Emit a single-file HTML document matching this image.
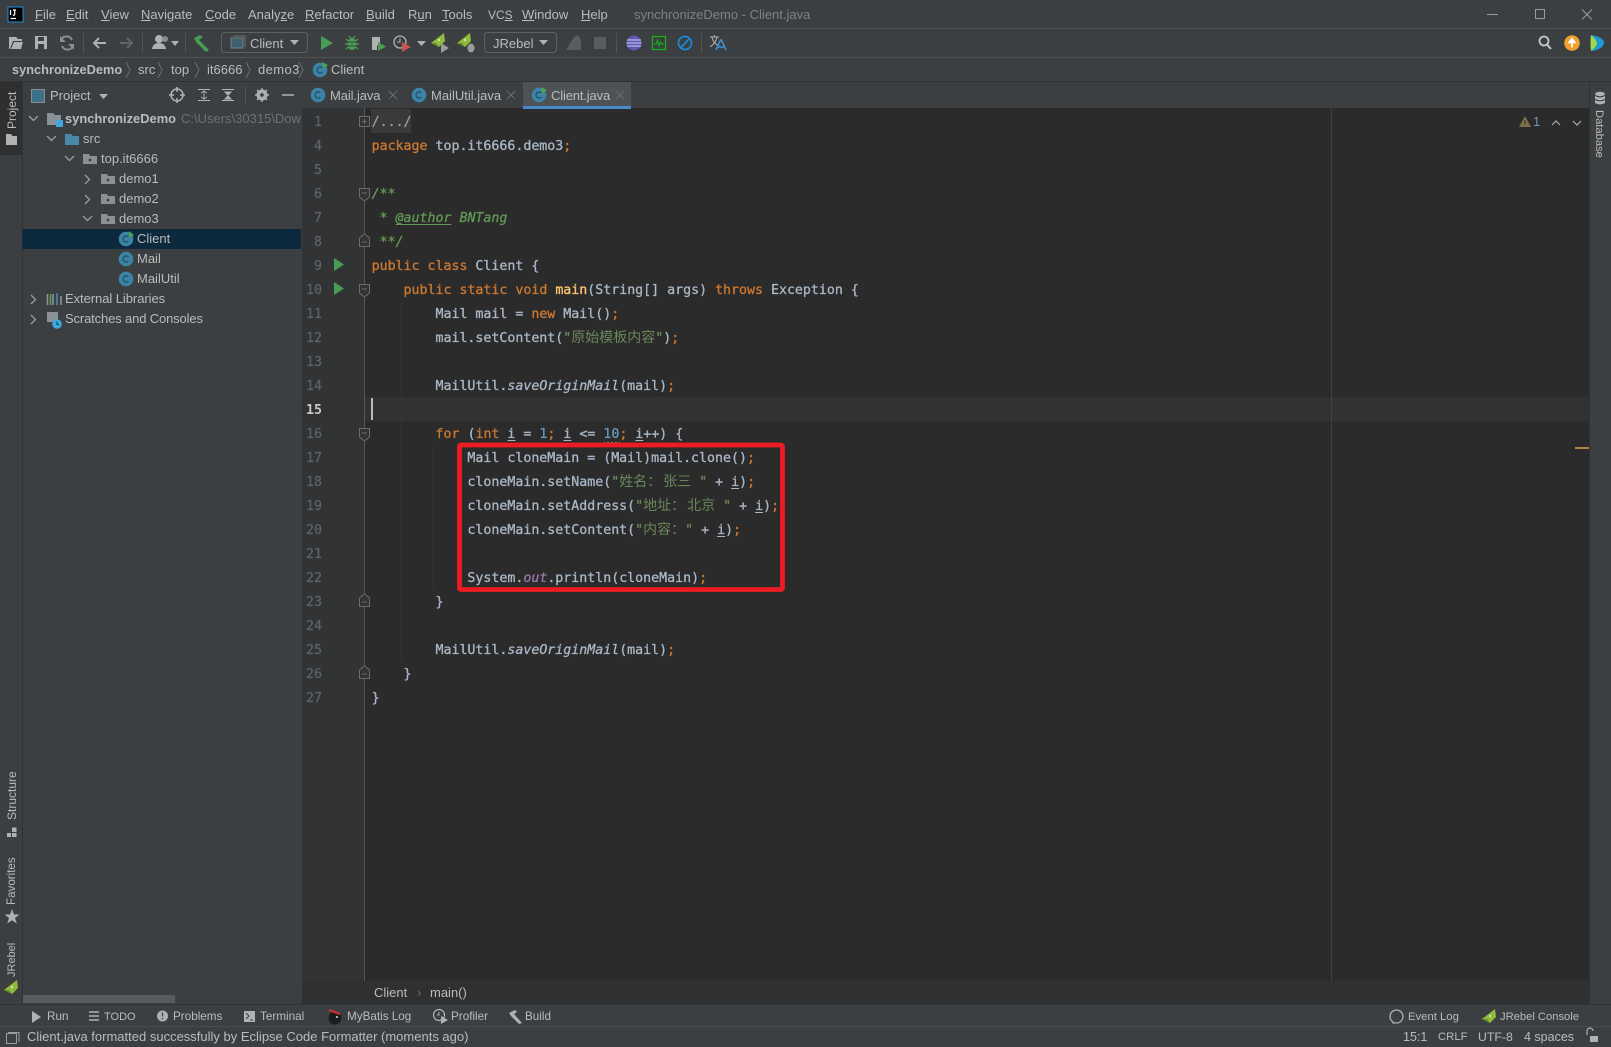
<!DOCTYPE html>
<html><head><meta charset="utf-8"><style>
html,body{margin:0;padding:0;background:#3c3f41;}
#r{position:relative;width:1611px;height:1047px;overflow:hidden;background:#3c3f41;font-family:"Liberation Sans","Noto Sans CJK SC",sans-serif;font-size:13px;color:#bbbbbb;}
.t{position:absolute;white-space:pre;line-height:20px;height:20px;}
.g{font-size:11.7px}
.l{position:absolute;left:371.6px;margin-top:2px;white-space:pre;height:24px;line-height:24px;font-family:"DejaVu Sans Mono",monospace;font-size:13.28px;color:#a9b7c6;-webkit-text-stroke:.3px currentColor;}
.n{position:absolute;left:290px;margin-top:1.5px;width:32px;text-align:right;height:24px;line-height:24px;font-family:"DejaVu Sans Mono",monospace;font-size:13.28px;color:#606366;-webkit-text-stroke:.2px currentColor;}
.k{color:#cc7832}.s{color:#6a8759}.d{color:#6897bb}.c{color:#629755;font-style:italic}.i{font-style:italic}.u{text-decoration:underline;text-underline-offset:2px}
.z{font-family:"Noto Sans CJK SC",sans-serif;font-size:14px;line-height:0;color:#6a8759;-webkit-text-stroke:0;}
.w{margin-right:2px}
.v{position:absolute;white-space:pre;line-height:14px;font-size:12px;color:#bbbbbb;transform-origin:0 0;}
.b{position:absolute;}
svg{position:absolute;left:0;top:0;}
</style></head><body><div id="r">
<!-- regions -->
<div class="b" style="left:0;top:28px;width:1611px;height:1px;background:#515151"></div>
<div class="b" style="left:0;top:57px;width:1611px;height:1px;background:#515151"></div>
<div class="b" style="left:0;top:81px;width:1611px;height:1px;background:#323232"></div>
<div class="b" style="left:22px;top:81px;width:1px;height:923px;background:#323232"></div>
<div class="b" style="left:0;top:82px;width:22px;height:73px;background:#2d2f30"></div>
<div class="b" style="left:302px;top:108px;width:1287px;height:873px;background:#2b2b2b"></div>
<div class="b" style="left:302px;top:108px;width:62px;height:873px;background:#313335"></div>
<div class="b" style="left:364px;top:397px;width:1225px;height:24px;background:#323232"></div>
<div class="b" style="left:302px;top:397px;width:62px;height:24px;background:#323232"></div>
<div class="b" style="left:302px;top:981px;width:1287px;height:23px;background:#2e3032;border-top:1px solid #323232;box-sizing:border-box"></div>
<div class="b" style="left:1589px;top:82px;width:1px;height:922px;background:#323232"></div>
<div class="b" style="left:0;top:1004px;width:1611px;height:1px;background:#323232"></div>
<div class="b" style="left:0;top:1026px;width:1611px;height:1px;background:#4b4b4b"></div>
<div class="b" style="left:523px;top:82px;width:108px;height:26px;background:#4e5254"></div>
<div class="b" style="left:523px;top:106px;width:108px;height:3px;background:#4a88c7"></div>
<div class="b" style="left:22px;top:229px;width:279px;height:20px;background:#0d293e"></div>
<div class="b" style="left:23px;top:995px;width:152px;height:8px;background:#595b5d"></div>
<div class="b" style="left:371px;top:109px;width:40px;height:24px;background:#3a3a3a"></div>
<div class="b" style="left:1331px;top:108px;width:1px;height:873px;background:#414141"></div>
<div class="b" style="left:364px;top:108px;width:1px;height:873px;background:#555555"></div>
<div class="b" style="left:401px;top:302px;width:1px;height:358px;background:#353535"></div>
<div class="b" style="left:433px;top:445px;width:1px;height:143px;background:#353535"></div>
<div class="b" style="left:1575px;top:447px;width:14px;height:2px;background:#a68a3a"></div>
<div class="b" style="left:371px;top:398px;width:2px;height:22px;background:#bbbbbb"></div>

<svg width="1611" height="1047" viewBox="0 0 1611 1047" fill="none">
<defs>
<g id="ci"><circle r="7.3" fill="#3b84a6"/><path d="M2.4-1.9A3 3 0 1 0 2.4 1.9" stroke="#26556b" stroke-width="1.4"/></g>
<g id="fd"><path d="M-7-5H-1L0-3H7V5H-7Z" fill="#8c9094"/><circle r="1.4" cx="0" cy="1" fill="#3c3f41"/></g>
<g id="jr"><path d="M-8 2L5-8 6 0 0 6Z" fill="#8fbc3a"/><path d="M-3 2L-8 2 0 6Z" fill="#5f8f2a"/><circle cx="0" cy="-1" r="1" fill="#eee"/></g>
</defs>
<!-- logo -->
<rect x="8" y="7" width="15" height="15" fill="#000" stroke="#1e8fe0" stroke-width="1"/><path d="M10.5 10V15M13 10H16M14.7 10V14.5Q14.7 15.5 12.8 15M10.5 18.5H16" stroke="#fff" stroke-width="1.2"/>
<!-- window -->
<path d="M1487 14.5H1498" stroke="#9a9a9a"/><rect x="1535.5" y="9.5" width="9" height="9" stroke="#9a9a9a" fill="none"/><path d="M1582 9.5L1592 19.5M1592 9.5L1582 19.5" stroke="#9a9a9a"/>
<!-- toolbar -->
<g stroke="#505254"><path d="M83.5 33V53M142.5 33V53M185.5 33V53M616.5 33V53M701.5 33V53"/></g>
<path d="M9 37H16L18 39H22V41H13L10 49H9ZM14 42H23L21 49H11Z" fill="#afb1b3"/>
<path d="M35 36H47V49H35Z" fill="#afb1b3"/><path d="M38 37H44V41H38ZM38 44H44V49H38Z" fill="#3c3f41"/>
<path d="M72 40A6 6 0 0 0 61 40M62 46A6 6 0 0 0 73 46" stroke="#8a8c8e" stroke-width="2"/><path d="M60 36V42H66ZM74 50V44H68Z" fill="#8a8c8e"/>
<path d="M106 43H94M99 38L94 43 99 48" stroke="#afb1b3" stroke-width="2"/><path d="M120 43H132M127 38L132 43 127 48" stroke="#636567" stroke-width="2"/>
<circle cx="159" cy="39" r="4" fill="#afb1b3"/><path d="M152 49Q153 43 159 43 165 43 166 49Z" fill="#afb1b3"/><circle cx="165" cy="39" r="3" fill="#8a8c8e"/><path d="M171 41H179L175 46Z" fill="#afb1b3"/>
<path d="M194 38L200 35 203 37 199 40 209 50 206 52 196 42Z" fill="#499c54"/>
<rect x="221.5" y="32.5" width="86" height="20" rx="3" stroke="#5e6163"/>
<path d="M233 36H245V47" stroke="#6e7072"/><rect x="231" y="38" width="12" height="10" fill="#3e5f6e" stroke="#7a7c7e"/>
<path d="M290 40H299L294.500 45Z" fill="#afb1b3"/>
<path d="M321 36L333 43 321 50Z" fill="#499c54"/>
<ellipse cx="352" cy="44" rx="4.500" ry="6" fill="#499c54"/><path d="M346 39L358 49M358 39L346 49M345 44H359M349 36L352 39 355 36" stroke="#499c54" stroke-width="1.200"/><path d="M348 42H356M348 46H356" stroke="#3c3f41"/>
<path d="M372 37H380V43L377 46V50H372Z" fill="#afb1b3"/><path d="M378 42L386 46.500 378 51Z" fill="#499c54"/>
<circle cx="400" cy="42" r="6" stroke="#afb1b3" stroke-width="1.300"/><path d="M400 38V42H397" stroke="#afb1b3"/><path d="M402 42L411 47 402 52Z" fill="#c75450"/><path d="M417 41H426L421.500 46Z" fill="#afb1b3"/>
<use href="#jr" x="439" y="41"/><path d="M441 43L449 48 441 53Z" fill="#9a9c9e"/>
<use href="#jr" x="465" y="41"/><ellipse cx="471" cy="48" rx="3.500" ry="4.500" fill="#9a9c9e"/>
<rect x="484.500" y="32.500" width="72" height="20" rx="3" stroke="#5e6163"/>
<path d="M539 40H548L543.500 45Z" fill="#afb1b3"/>
<path d="M566 50L574 37 578 35 581 40 581 50Z" fill="#5a5c5e"/>
<rect x="594" y="37" width="12" height="12" fill="#5a5c5e"/>
<circle cx="634" cy="43" r="7.500" fill="#5e58b8"/><path d="M627 40H641M626.500 43H641.500M627 46H641" stroke="#cfcfee"/>
<rect x="652.500" y="36.500" width="13" height="13" stroke="#14b814" stroke-width="1.200"/><path d="M654 44H656L657.500 40 659 46 660.500 42 662 44H664" stroke="#14b814"/>
<circle cx="685" cy="43" r="6.500" stroke="#1e88d8" stroke-width="1.700"/><path d="M681 47.500L689.500 38.500" stroke="#1e88d8" stroke-width="1.700"/>
<path d="M710 37H719M714.500 35V37M712 37Q713 43 719 46M717 37Q716 43 710 47" stroke="#afb1b3"/><path d="M716 50L720.500 40H721.500L726 50M717.500 47H724.500" stroke="#3d8fd0" stroke-width="1.600"/>
<circle cx="1544" cy="41" r="4.500" stroke="#c4c6c8" stroke-width="1.800"/><path d="M1547 44.500L1551 49" stroke="#c4c6c8" stroke-width="2"/>
<circle cx="1572" cy="43" r="7.800" fill="#f0a02c"/><path d="M1572 47.500V40M1569 42.500L1572 38.500 1575 42.500Z" stroke="#fff" stroke-width="1.500" fill="#fff"/>
<path d="M1591 35Q1604 37 1604 43 1603 49 1592 51 1590 43 1591 35Z" fill="#1d9ad6"/><path d="M1591 35Q1597 40 1597 44 1595 48 1591 51 1590 43 1591 35Z" fill="#9ed84c"/>
<!-- nav chevrons -->
<g stroke="#6a6c6e"><path d="M126 62L130 70 126 78M158 62L162 70 158 78M195 62L199 70 195 78M246 62L250 70 246 78M299 62L303 70 299 78"/></g>
<use href="#ci" x="320" y="70"/><path d="M322 62L328 65 323 69Z" fill="#4fa04f"/>
<!-- project header -->
<rect x="31.500" y="89.500" width="13" height="13" fill="#3e6f88" stroke="#8a8c8e"/>
<path d="M99 94H108L103.500 99Z" fill="#afb1b3"/>
<circle cx="177" cy="95" r="6" stroke="#afb1b3" stroke-width="1.500"/><path d="M177 87V92M177 98V103M169 95H174M180 95H185" stroke="#afb1b3" stroke-width="1.500"/>
<path d="M198 89.500H210M198 100.500H210M204 91V99M201 93L204 91 207 93M201 97L204 99 207 97" stroke="#afb1b3"/>
<path d="M222 89.500H234M222 100.500H234" stroke="#afb1b3"/><path d="M225 92L228 95 231 92ZM225 99L228 96 231 99Z" fill="#afb1b3" stroke="#afb1b3"/>
<path d="M245.500 86V105" stroke="#505254"/>
<circle cx="262" cy="95" r="4" stroke="#afb1b3" stroke-width="3"/><path d="M262 88V102M255 95H269M257 90L267 100M267 90L257 100" stroke="#afb1b3" stroke-width="1.400"/><circle cx="262" cy="95" r="1.800" fill="#3c3f41"/>
<path d="M282 95H294" stroke="#afb1b3" stroke-width="1.500"/>
<!-- tabs -->
<use href="#ci" x="318" y="95"/><use href="#ci" x="419" y="95"/><use href="#ci" x="539" y="95"/><path d="M541 87L547 90 542 94Z" fill="#4fa04f"/>
<path d="M389 91L397 99M397 91L389 99M507 91L515 99M515 91L507 99M616 91L624 99M624 91L616 99" stroke="#6a6c6e"/>
<!-- tree -->
<g stroke="#9a9c9e" stroke-width="1.300"><path d="M29 116L33.500 120.500 38 116M47 136L51.500 140.500 56 136M65 156L69.500 160.500 74 156M83 216L87.500 220.500 92 216M85 175L89.500 179.500 85 184M85 195L89.500 199.500 85 204M31 295L35.500 299.500 31 304M31 315L35.500 319.500 31 324"/></g>
<path d="M47 113H53L55 115H61V125H47Z" fill="#8a9299"/><rect x="56" y="120" width="7" height="7" fill="#3fa8dc"/>
<path d="M65 134H71L73 136H79V145H65Z" fill="#4a88a8"/>
<use href="#fd" x="90" y="159"/><use href="#fd" x="108" y="179"/><use href="#fd" x="108" y="199"/><use href="#fd" x="108" y="219"/>
<use href="#ci" x="126" y="239"/><path d="M129 231L134 235 129 238Z" fill="#4fa04f"/><use href="#ci" x="126" y="259"/><use href="#ci" x="126" y="279"/>
<path d="M47.500 294V305M53 294V305M61 296V305" stroke="#8a9299" stroke-width="1.600"/><path d="M50.500 294V305" stroke="#5fa04f" stroke-width="1.600"/><path d="M57 293V305" stroke="#4a88a8" stroke-width="1.600"/>
<rect x="47" y="312" width="11" height="10" fill="#8a9299"/><circle cx="57" cy="324" r="4.800" fill="#3fa8dc"/><path d="M57 321.500V324.500H59" stroke="#1e3b4a"/>
<!-- left stripe icons -->
<path d="M6 134H11L12.500 136H17V145H6Z" fill="#afb1b3"/>
<path d="M12 827.500H16.500V832H12ZM7 833H11V837H7ZM12 833H16.500V837H12Z" fill="#afb1b3"/>
<path d="M12 909L14 914.500H19.500L15 918 16.800 923.500 12 920.200 7.200 923.500 9 918 4.500 914.500H10Z" fill="#afb1b3"/>
<use href="#jr" x="12" y="988"/>
<!-- right stripe -->
<ellipse cx="1600" cy="94" rx="5" ry="2.200" fill="#afb1b3"/><path d="M1595 96V103Q1600 106 1605 103V96Q1600 99 1595 96Z" fill="#afb1b3"/><path d="M1595 99.500Q1600 102 1605 99.500" stroke="#3c3f41"/>
<path d="M1525 116L1531 127H1519Z" fill="#7d6f4b"/><path d="M1525 120V124" stroke="#2b2b2b"/>
<path d="M1552 125L1556 121 1560 125M1573 121L1577 125 1581 121" stroke="#a9abad" stroke-width="1.200"/>
<!-- gutter -->
<path d="M334 258L344 264.500 334 271ZM334 282L344 288.500 334 295Z" fill="#499c54"/>
<g stroke="#6a6c6e" fill="#313335">
<rect x="359.500" y="116.500" width="10" height="10"/><path d="M362 121.500H367M364.500 119V124"/>
<path d="M359.500 188.500H369.500V197L364.500 201 359.500 197Z"/><path d="M362 193H367"/>
<path d="M359.500 246.500H369.500V238L364.500 234 359.500 238Z"/><path d="M362 242H367"/>
<path d="M359.500 284.500H369.500V293L364.500 297 359.500 293Z"/><path d="M362 289H367"/>
<path d="M359.500 428.500H369.500V437L364.500 441 359.500 437Z"/><path d="M362 433H367"/>
<path d="M359.500 606.500H369.500V598L364.500 594 359.500 598Z"/><path d="M362 602H367"/>
<path d="M359.500 678.500H369.500V670L364.500 666 359.500 670Z"/><path d="M362 674H367"/>
</g>
<!-- wavy -->
<path d="M604 442L606 444 608 442 610 444 612 442 614 444 616 442 618 444 620 442" stroke="#9a9a6a" stroke-width=".8"/>
<!-- bottom icons -->
<path d="M32 1011L41 1017 32 1023Z" fill="#afb1b3"/>
<path d="M89 1012H99M89 1016H99M89 1020H99" stroke="#afb1b3" stroke-width="1.500"/>
<circle cx="162.500" cy="1016" r="5.500" fill="#afb1b3"/><path d="M162.500 1012.500V1016.500M162.500 1018V1019.500" stroke="#3c3f41" stroke-width="1.300"/>
<rect x="244" y="1011" width="11" height="11" fill="#afb1b3"/><path d="M246 1013L249 1016 246 1019M250 1020H253" stroke="#3c3f41"/>
<circle cx="335" cy="1018" r="6.500" fill="#1c1c1c"/><path d="M329 1010L340 1014" stroke="#d03030" stroke-width="2"/><circle cx="337" cy="1017" r="1" fill="#ddd"/>
<circle cx="439" cy="1015" r="5.500" stroke="#afb1b3" stroke-width="1.200"/><path d="M439 1012V1015H437" stroke="#afb1b3"/><path d="M441 1016L448 1020 441 1024Z" fill="#afb1b3"/>
<path d="M509 1013L515 1010 517 1012 514 1014 522 1023 519 1024 511 1016Z" fill="#afb1b3"/>
<path d="M8 1032.500H19V1042" stroke="#9a9c9e"/><rect x="6.500" y="1033.500" width="10" height="10" fill="#3c3f41" stroke="#9a9c9e"/>
<path d="M1393 1022A6.500 6.500 0 1 1 1396 1023H1393Z" stroke="#afb1b3" stroke-width="1.300"/>
<use href="#jr" x="1490" y="1017"/>
<path d="M1587 1035V1031A3 3 0 0 1 1593 1031" stroke="#afb1b3" stroke-width="1.200"/><rect x="1590" y="1036" width="8" height="6" fill="#afb1b3"/>
<!-- red box -->
<rect x="459.500" y="445" width="323" height="144.500" rx="1.500" stroke="#ed1c24" stroke-width="4.800"/>
</svg>

<!-- menu -->
<div class="t" style="left:35px;top:5px"><u>F</u>ile</div>
<div class="t" style="left:66px;top:5px"><u>E</u>dit</div>
<div class="t" style="left:101px;top:5px"><u>V</u>iew</div>
<div class="t" style="left:141px;top:5px"><u>N</u>avigate</div>
<div class="t" style="left:205px;top:5px"><u>C</u>ode</div>
<div class="t" style="left:248px;top:5px">Analy<u>z</u>e</div>
<div class="t" style="left:305px;top:5px"><u>R</u>efactor</div>
<div class="t" style="left:366px;top:5px"><u>B</u>uild</div>
<div class="t" style="left:408px;top:5px">R<u>u</u>n</div>
<div class="t" style="left:442px;top:5px"><u>T</u>ools</div>
<div class="t" style="left:488px;top:5px;font-size:12px">VC<u>S</u></div>
<div class="t" style="left:522px;top:5px"><u>W</u>indow</div>
<div class="t" style="left:581px;top:5px"><u>H</u>elp</div>
<div class="t" style="left:634px;top:5px;color:#808080">synchronizeDemo - Client.java</div>
<div class="t" style="left:250px;top:34px;color:#bbbbbb">Client</div>
<div class="t" style="left:493px;top:34px;color:#bbbbbb">JRebel</div>
<!-- nav -->
<div class="t" style="left:12px;top:60px;font-weight:bold;font-size:12.8px">synchronizeDemo</div>
<div class="t" style="left:138px;top:60px">src</div>
<div class="t" style="left:171px;top:60px">top</div>
<div class="t" style="left:207px;top:60px">it6666</div>
<div class="t" style="left:258px;top:60px;letter-spacing:.4px">demo3</div>
<div class="t" style="left:331px;top:60px">Client</div>
<!-- project header + tabs -->
<div class="t" style="left:50px;top:86px">Project</div>
<div class="t" style="left:330px;top:86px;letter-spacing:-.1px">Mail.java</div>
<div class="t" style="left:431px;top:86px">MailUtil.java</div>
<div class="t" style="left:551px;top:86px;letter-spacing:-.15px">Client.java</div>
<!-- tree -->
<div class="t" style="left:65px;top:109px;font-weight:bold;font-size:12.9px">synchronizeDemo</div>
<div class="t" style="left:181px;top:109px;color:#6e7072;width:120px;overflow:hidden">C:\Users\30315\Downloads</div>
<div class="t" style="left:83px;top:129px">src</div>
<div class="t" style="left:101px;top:149px">top.it6666</div>
<div class="t" style="left:119px;top:169px">demo1</div>
<div class="t" style="left:119px;top:189px">demo2</div>
<div class="t" style="left:119px;top:209px">demo3</div>
<div class="t" style="left:137px;top:229px">Client</div>
<div class="t" style="left:137px;top:249px">Mail</div>
<div class="t" style="left:137px;top:269px">MailUtil</div>
<div class="t" style="left:65px;top:289px;letter-spacing:-.06px">External Libraries</div>
<div class="t" style="left:65px;top:309px;letter-spacing:-.14px">Scratches and Consoles</div>
<!-- vertical -->
<div class="v" style="left:5px;top:129px;transform:rotate(-90deg)">Project</div>
<div class="v" style="left:5px;top:820px;transform:rotate(-90deg)">Structure</div>
<div class="v" style="left:5px;top:905px;transform:rotate(-90deg);font-size:11.6px">Favorites</div>
<div class="v" style="left:5px;top:977px;transform:rotate(-90deg);font-size:11px">JRebel</div>
<div class="v" style="left:1606px;top:110px;transform:rotate(90deg);font-size:11.2px">Database</div>
<div class="t" style="left:1533px;top:112px;color:#6897bb">1</div>
<!-- line numbers -->
<div class="n" style="top:109px">1</div><div class="n" style="top:133px">4</div><div class="n" style="top:157px">5</div><div class="n" style="top:181px">6</div><div class="n" style="top:205px">7</div><div class="n" style="top:229px">8</div><div class="n" style="top:253px">9</div><div class="n" style="top:277px">10</div><div class="n" style="top:301px">11</div><div class="n" style="top:325px">12</div><div class="n" style="top:349px">13</div><div class="n" style="top:373px">14</div><div class="n" style="top:397px;color:#c8c8c8;font-weight:bold;-webkit-text-stroke:0">15</div><div class="n" style="top:421px">16</div><div class="n" style="top:445px">17</div><div class="n" style="top:469px">18</div><div class="n" style="top:493px">19</div><div class="n" style="top:517px">20</div><div class="n" style="top:541px">21</div><div class="n" style="top:565px">22</div><div class="n" style="top:589px">23</div><div class="n" style="top:613px">24</div><div class="n" style="top:637px">25</div><div class="n" style="top:661px">26</div><div class="n" style="top:685px">27</div>
<!-- code -->
<div class="l" style="top:109px;color:#9a9a9a">/.../</div>
<div class="l" style="top:133px"><span class="k">package</span> top.it6666.demo3<span class="k">;</span></div>
<div class="l c" style="top:181px">/**</div>
<div class="l c" style="top:205px"> * <span class="u">@author</span> BNTang</div>
<div class="l c" style="top:229px"> **/</div>
<div class="l" style="top:253px"><span class="k">public class</span> Client {</div>
<div class="l" style="top:277px">    <span class="k">public static void</span> <span style="color:#ffc66d">main</span>(String[] args) <span class="k">throws</span> Exception {</div>
<div class="l" style="top:301px">        Mail mail = <span class="k">new</span> Mail()<span class="k">;</span></div>
<div class="l" style="top:325px">        mail.setContent(<span class="s">"</span><span class="z">原始模板内容</span><span class="s">"</span>)<span class="k">;</span></div>
<div class="l" style="top:373px">        MailUtil.<span class="i">saveOriginMail</span>(mail)<span class="k">;</span></div>
<div class="l" style="top:421px">        <span class="k">for</span> (<span class="k">int</span> <span class="u">i</span> = <span class="d">1</span><span class="k">;</span> <span class="u">i</span> &lt;= <span class="d">10</span><span class="k">;</span> <span class="u">i</span>++) {</div>
<div class="l" style="top:445px">            Mail cloneMain = (Mail)mail.clone()<span class="k">;</span></div>
<div class="l" style="top:469px">            cloneMain.setName(<span class="s">"</span><span class="z"><span class="w">姓名：</span>张三</span><span class="s"> "</span> + <span class="u">i</span>)<span class="k">;</span></div>
<div class="l" style="top:493px">            cloneMain.setAddress(<span class="s">"</span><span class="z"><span class="w">地址：</span>北京</span><span class="s"> "</span> + <span class="u">i</span>)<span class="k">;</span></div>
<div class="l" style="top:517px">            cloneMain.setContent(<span class="s">"</span><span class="z">内容：</span><span class="s">"</span> + <span class="u">i</span>)<span class="k">;</span></div>
<div class="l" style="top:565px">            System.<span class="i" style="color:#9876aa">out</span>.println(cloneMain)<span class="k">;</span></div>
<div class="l" style="top:589px">        }</div>
<div class="l" style="top:637px">        MailUtil.<span class="i">saveOriginMail</span>(mail)<span class="k">;</span></div>
<div class="l" style="top:661px">    }</div>
<div class="l" style="top:685px">}</div>
<!-- breadcrumbs -->
<div class="t" style="left:374px;top:983px">Client</div>
<div class="t" style="left:417px;top:983px;color:#6a6c6e">›</div>
<div class="t" style="left:430px;top:983px">main()</div>
<!-- tool bar -->
<div class="t g" style="left:47px;top:1007px">Run</div>
<div class="t g" style="left:104px;top:1007px;font-size:11px">TODO</div>
<div class="t g" style="left:173px;top:1007px">Problems</div>
<div class="t g" style="left:260px;top:1007px">Terminal</div>
<div class="t g" style="left:347px;top:1007px">MyBatis Log</div>
<div class="t g" style="left:451px;top:1007px">Profiler</div>
<div class="t g" style="left:525px;top:1007px">Build</div>
<div class="t g" style="left:1408px;top:1007px;font-size:11.3px">Event Log</div>
<div class="t g" style="left:1500px;top:1007px;font-size:11.2px">JRebel Console</div>
<!-- status -->
<div class="t" style="left:27px;top:1027px">Client.java formatted successfully by Eclipse Code Formatter (moments ago)</div>
<div class="t" style="left:1403px;top:1027px;font-size:12.500px">15:1</div>
<div class="t" style="left:1438px;top:1027px;font-size:11.3px">CRLF</div>
<div class="t" style="left:1478px;top:1027px;font-size:12.300px">UTF-8</div>
<div class="t" style="left:1524px;top:1027px;font-size:12.500px">4 spaces</div>
</div></body></html>
